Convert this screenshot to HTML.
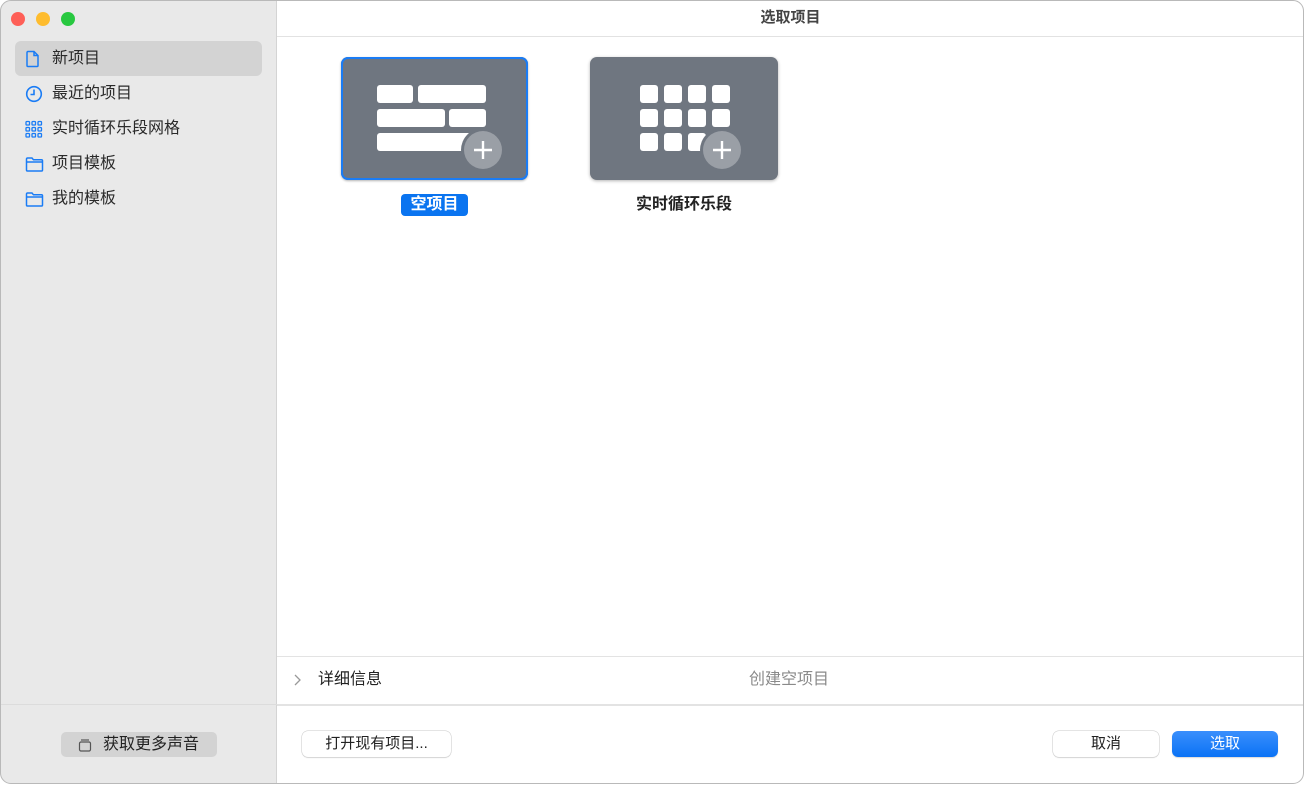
<!DOCTYPE html>
<html><head><meta charset="utf-8"><style>
*{box-sizing:border-box;margin:0;padding:0}
body{width:1306px;height:785px;background:#fff;font-family:"Liberation Sans","Noto Sans CJK SC",sans-serif;position:relative;overflow:hidden}
.win{position:absolute;left:0;top:0;width:1304px;height:784px;border-radius:11px;overflow:hidden;background:#fff}
.frame{position:absolute;left:0;top:0;width:1304px;height:784px;border:1px solid #b9b9b9;border-radius:11px;z-index:10}
.side{position:absolute;left:0;top:0;width:277px;height:100%;background:#e9e9e9;border-right:1px solid #d4d4d4}
.dot{position:absolute;top:12px;width:14px;height:14px;border-radius:50%}
.item{position:absolute;left:15px;width:247px;height:35px;border-radius:6px;font-size:16px;color:#2a2a2a;line-height:35px;padding-left:37px}
.item svg{position:absolute;left:10px;top:9px}
.sel{background:#d3d3d3}
.abs{position:absolute}
.btn{position:absolute;height:26px;border-radius:6px;background:#fff;box-shadow:0 0 0 .5px #c8c8c8,0 1px 1px rgba(0,0,0,.12);font-size:15px;text-align:center;line-height:26px;color:#222}
</style></head><body><div class="win">
<div class="side">
<div class="dot" style="left:11px;background:#fe5f57"></div>
<div class="dot" style="left:36px;background:#febc2e"></div>
<div class="dot" style="left:61px;background:#28c840"></div>
<div class="item sel" style="top:41px"><svg width="16" height="18" viewBox="0 0 16 18"><path d="M3 1.5h6l4 4v10a1 1 0 0 1-1 1H3a1 1 0 0 1-1-1v-13a1 1 0 0 1 1-1zM9 1.5v4h4" fill="none" stroke="#1a7cf5" stroke-width="1.5"/></svg>新项目</div>
<div class="item" style="top:76px"><svg width="18" height="18" viewBox="0 0 18 18"><circle cx="9" cy="9" r="7.3" fill="none" stroke="#1a7cf5" stroke-width="1.6"/><path d="M9 4.5v5H5.5" fill="none" stroke="#1a7cf5" stroke-width="1.6"/></svg>最近的项目</div>
<div class="item" style="top:111px"><svg width="18" height="18" viewBox="0 0 18 18" fill="none" stroke="#1a7cf5" stroke-width="1.3"><rect x="1" y="1.5" width="3.5" height="3.5" rx=".8"/><rect x="7" y="1.5" width="3.5" height="3.5" rx=".8"/><rect x="13" y="1.5" width="3.5" height="3.5" rx=".8"/><rect x="1" y="7.5" width="3.5" height="3.5" rx=".8"/><rect x="7" y="7.5" width="3.5" height="3.5" rx=".8"/><rect x="13" y="7.5" width="3.5" height="3.5" rx=".8"/><rect x="1" y="13.5" width="3.5" height="3.5" rx=".8"/><rect x="7" y="13.5" width="3.5" height="3.5" rx=".8"/><rect x="13" y="13.5" width="3.5" height="3.5" rx=".8"/></svg>实时循环乐段网格</div>
<div class="item" style="top:146px"><svg width="19" height="18" viewBox="0 0 19 18"><path d="M1.5 4a1 1 0 0 1 1-1h4.5l1.5 1.8h8a1 1 0 0 1 1 1V15a1 1 0 0 1-1 1h-14a1 1 0 0 1-1-1zM1.5 7h16" fill="none" stroke="#1a7cf5" stroke-width="1.5"/></svg>项目模板</div>
<div class="item" style="top:181px"><svg width="19" height="18" viewBox="0 0 19 18"><path d="M1.5 4a1 1 0 0 1 1-1h4.5l1.5 1.8h8a1 1 0 0 1 1 1V15a1 1 0 0 1-1 1h-14a1 1 0 0 1-1-1zM1.5 7h16" fill="none" stroke="#1a7cf5" stroke-width="1.5"/></svg>我的模板</div>
<div class="abs" style="left:0;top:704px;width:277px;height:1px;background:#dcdcdc"></div>
<div class="abs" style="left:61px;top:732px;width:156px;height:25px;border-radius:5px;background:#d3d3d3;font-size:16px;line-height:25px;color:#222;padding-left:42px"><svg class="abs" style="left:17px;top:6px" width="14" height="14" viewBox="0 0 14 14" fill="none" stroke="#555" stroke-width="1.2"><rect x="1.5" y="4" width="11" height="9" rx="1.5"/><path d="M3 2h8"/></svg>获取更多声音</div>
</div>
<div class="abs" style="left:277px;top:0;right:0;height:37px;border-bottom:1px solid #e2e2e2;text-align:center;line-height:36px;font-size:15px;font-weight:bold;color:#444">选取项目</div>
<!-- card1 -->
<div class="abs" style="left:341px;top:57px;width:187px;height:123px;border-radius:7px;background:#6f7680;box-shadow:inset 0 0 0 2px #1a7cf5,0 1px 2px rgba(0,0,0,.3)">
<svg width="187" height="123" style="position:absolute;left:0;top:0"><g fill="#fff"><rect x="36" y="28" width="36" height="18" rx="3"/><rect x="77" y="28" width="68" height="18" rx="3"/><rect x="36" y="52" width="68" height="18" rx="3"/><rect x="108" y="52" width="37" height="18" rx="3"/><rect x="36" y="76" width="100" height="18" rx="3"/></g><circle cx="142" cy="93" r="22" fill="#6f7680"/><circle cx="142" cy="93" r="19" fill="#9a9fa6"/><path d="M142 84v18M133 93h18" stroke="#fff" stroke-width="2.4"/></svg></div>
<div class="abs" style="left:401px;top:194px;width:67px;height:22px;border-radius:4px;background:#0a74f0;color:#fff;font-weight:bold;font-size:16px;text-align:center;line-height:22px">空项目</div>
<!-- card2 -->
<div class="abs" style="left:590px;top:57px;width:188px;height:123px;border-radius:7px;background:#6f7680;box-shadow:0 1px 3px rgba(0,0,0,.3)">
<svg width="188" height="123" style="position:absolute;left:0;top:0"><g fill="#fff"><rect x="50" y="28" width="18" height="18" rx="3"/><rect x="74" y="28" width="18" height="18" rx="3"/><rect x="98" y="28" width="18" height="18" rx="3"/><rect x="122" y="28" width="18" height="18" rx="3"/><rect x="50" y="52" width="18" height="18" rx="3"/><rect x="74" y="52" width="18" height="18" rx="3"/><rect x="98" y="52" width="18" height="18" rx="3"/><rect x="122" y="52" width="18" height="18" rx="3"/><rect x="50" y="76" width="18" height="18" rx="3"/><rect x="74" y="76" width="18" height="18" rx="3"/><rect x="98" y="76" width="18" height="18" rx="3"/></g><circle cx="132" cy="93" r="22" fill="#6f7680"/><circle cx="132" cy="93" r="19" fill="#9a9fa6"/><path d="M132 84v18M123 93h18" stroke="#fff" stroke-width="2.4"/></svg></div>
<div class="abs" style="left:590px;top:194px;width:188px;text-align:center;font-weight:bold;font-size:16px;line-height:22px;color:#222">实时循环乐段</div>
<!-- details -->
<div class="abs" style="left:277px;top:656px;right:0;height:1px;background:#e3e3e3"></div>
<div class="abs" style="left:277px;top:704px;right:0;height:2px;background:#e3e3e3"></div>
<svg class="abs" style="left:292px;top:673px" width="10" height="14" viewBox="0 0 10 14"><path d="M3 2l5 5-5 5" fill="none" stroke="#999" stroke-width="1.3"/></svg>
<div class="abs" style="left:318px;top:669px;font-size:16px;line-height:22px;color:#222">详细信息</div>
<div class="abs" style="left:749px;top:669px;font-size:16px;line-height:22px;color:#8a8a8a">创建空项目</div>
<div class="btn" style="left:302px;top:731px;width:149px">打开现有项目...</div>
<div class="btn" style="left:1053px;top:731px;width:106px">取消</div>
<div class="btn" style="left:1172px;top:731px;width:106px;background:linear-gradient(#3a8ffc,#0a72f5);color:#fff;box-shadow:0 1px 1px rgba(0,0,0,.15)">选取</div>
</div><div class="frame"></div></body></html>
